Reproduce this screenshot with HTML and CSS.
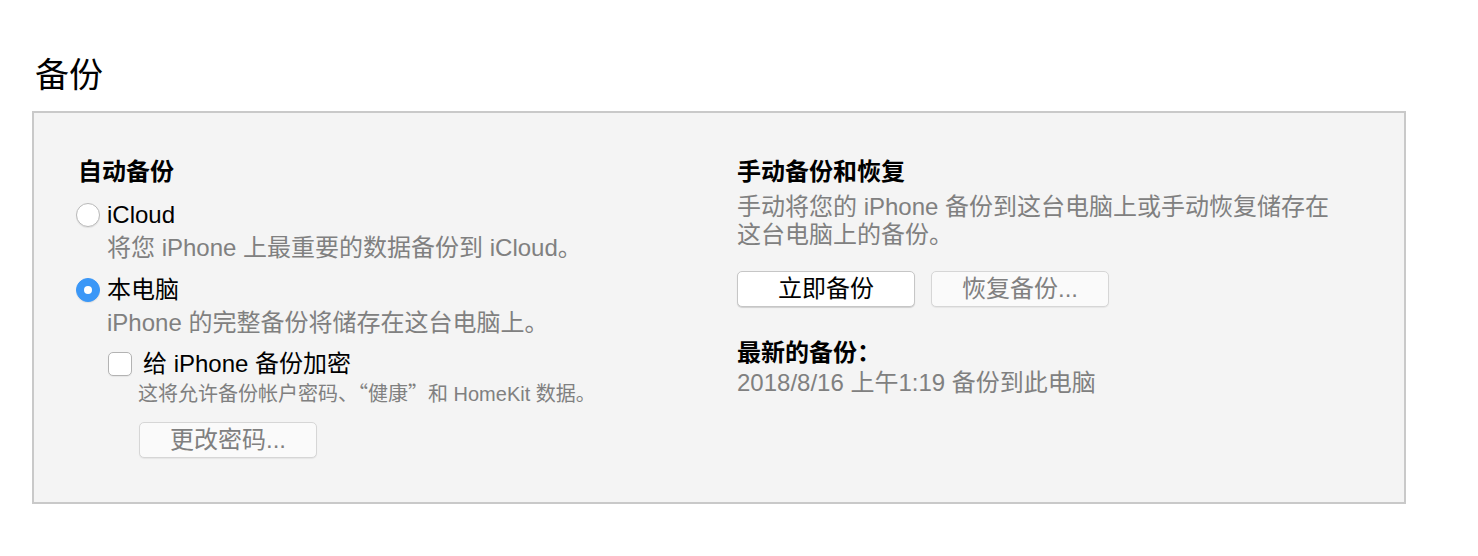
FILE: index.html
```html
<!DOCTYPE html>
<html>
<head>
    <title>备份</title>
    <link rel="stylesheet" href="styles.css">
</head>
<body>
    <div class="page">
        <h1>备份</h1>

        <div class="panel">
            <div class="col col-auto">
                <h3>自动备份</h3>

                <div class="option">
                    <span class="radio"></span>
                    <span class="label">iCloud</span>
                </div>
                <p class="hint">将您 iPhone 上最重要的数据备份到 iCloud。</p>

                <div class="option option-gap">
                    <span class="radio checked"></span>
                    <span class="label">本电脑</span>
                </div>
                <p class="hint">iPhone 的完整备份将储存在这台电脑上。</p>

                <div class="sub">
                    <div class="check-row">
                        <span class="checkbox"></span>
                        <span class="label">给 iPhone 备份加密</span>
                    </div>
                    <p class="hint small">这将允许备份帐户密码、<span class="cjk">“健康”</span>和 HomeKit 数据。</p>
                    <button class="btn dim">更改密码...</button>
                </div>
            </div>

            <div class="col col-manual">
                <h3>手动备份和恢复</h3>
                <p class="hint wrap">手动将您的 iPhone 备份到这台电脑上或手动恢复储存在这台电脑上的备份。</p>

                <div class="btn-row">
                    <button class="btn primary">立即备份</button>
                    <button class="btn dim">恢复备份...</button>
                </div>

                <h3 class="latest">最新的备份：</h3>
                <p class="hint date">2018/8/16 上午1:19 备份到此电脑</p>
            </div>
        </div>
    </div>
</body>
</html>
```

FILE: styles.css
```css
body {
    margin: 0;
    background: #fff;
    font-family: "Liberation Sans", "Noto Sans CJK SC", sans-serif;
    color: #000;
}
.page {
    padding: 55px 72px 0 32px;
}
h1 {
    margin: 0 0 16px 3px;
    font-size: 34px;
    line-height: 40px;
    font-weight: normal;
}
.panel {
    display: grid;
    grid-template-columns: 659px 1fr;
    box-sizing: border-box;
    width: 1374px;
    padding: 42px 44px 44px 44px;
    background: #f4f4f4;
    border: 2px solid #c9c9c9;
}
.col {
    display: flex;
    flex-direction: column;
    align-items: flex-start;
}
h3 {
    margin: 0;
    font-size: 24px;
    line-height: 33px;
    font-weight: bold;
}
p {
    margin: 0;
}
.hint {
    font-size: 24px;
    line-height: 33px;
    color: #808080;
}
.hint.small {
    font-size: 20px;
    line-height: 28px;
}
/* full-width quotes come from the CJK face */
.cjk {
    font-family: "Noto Sans CJK SC", sans-serif;
    line-height: 1;
}
.option {
    display: flex;
    align-items: center;
    margin: 10px 0 0 -2px;
    font-size: 24px;
    line-height: 33px;
}
.option-gap {
    margin-top: 9px;
}
.option + .hint {
    margin-left: 29px;
}
.label {
    margin-left: 7px;
}
.radio {
    width: 22px;
    height: 22px;
    border: 1px solid #b9b9b9;
    border-radius: 50%;
    background: #fff;
    box-shadow: 0 1px 1px rgba(0, 0, 0, 0.08);
    position: relative;
}
.radio.checked {
    background: #3a97f7;
    border-color: #3a97f7;
}
.radio.checked::after {
    content: "";
    position: absolute;
    left: 7px;
    top: 7px;
    width: 8px;
    height: 8px;
    border-radius: 50%;
    background: #fff;
}
.sub {
    display: flex;
    flex-direction: column;
    align-items: flex-start;
    margin: 8px 0 0 30px;
}
.check-row {
    display: flex;
    align-items: center;
    font-size: 24px;
    line-height: 33px;
}
.check-row .label {
    margin-left: 11px;
}
.checkbox {
    width: 22px;
    height: 22px;
    border: 1px solid #b3b3b3;
    border-radius: 5px;
    background: #fff;
    box-shadow: 0 1px 1px rgba(0, 0, 0, 0.06);
}
.sub .hint.small {
    margin-left: 30px;
}
.sub .btn {
    margin: 14px 0 0 31px;
}
.btn {
    width: 178px;
    height: 36px;
    padding: 0;
    border: 1px solid #d6d6d6;
    border-radius: 5px;
    background: #fafafa;
    font-family: inherit;
    font-size: 24px;
    line-height: 34px;
    color: #000;
    box-shadow: 0 1px 1px rgba(0, 0, 0, 0.06);
}
.btn.primary {
    background: #fff;
    border-color: #c6c6c6;
    box-shadow: 0 1px 1px rgba(0, 0, 0, 0.15);
}
.btn.dim {
    color: #808080;
}
.wrap {
    width: 615px;
    margin-top: 5px;
    line-height: 28px;
}
.btn-row {
    display: flex;
    gap: 16px;
    margin-top: 22px;
}
.latest {
    margin-top: 29px;
}
.date {
    line-height: 28px;
}
```
